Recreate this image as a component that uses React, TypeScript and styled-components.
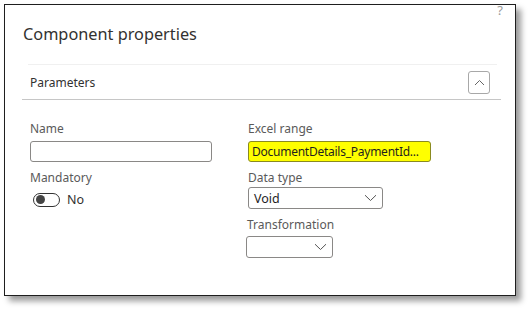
import React from "react";
import styled, { createGlobalStyle } from "styled-components";

const Global = createGlobalStyle`
  html, body { margin: 0; padding: 0; background: #ffffff; }
  body { font-family: "Noto Sans", "Open Sans", sans-serif; color: #323130; }
`;

const Page = styled.div`
  width: 529px;
  height: 309px;
  padding: 4px 0 0 4px;
  box-sizing: border-box;
  overflow: hidden;
`;

const Frame = styled.div`
  position: relative;
  width: 512px;
  height: 292px;
  box-sizing: border-box;
  border: 1px solid #1e1e1e;
  background: #fff;
  box-shadow: 5px 5px 6px rgba(0, 0, 0, 0.4);
  padding: 17px 14px 0 17px;
`;

const Help = styled.span`
  position: absolute;
  top: -3px;
  right: 12px;
  font-size: 13px;
  color: #9a9a9a;
  line-height: 16px;
`;

const Title = styled.h1`
  margin: 0 0 0 1px;
  font-size: 16.3px;
  font-weight: 400;
  line-height: 24px;
  color: #323130;
`;

const SoftRule = styled.div`
  height: 1px;
  background: #f0f0f0;
  margin: 18px 4px 0 6px;
`;

const SectionHeader = styled.div`
  display: flex;
  align-items: center;
  justify-content: space-between;
  height: 34px;
  border-bottom: 1px solid #c6c6c6;
  padding: 0 11px 0 8px;
`;

const SectionTitle = styled.span`
  font-size: 12px;
  color: #323130;
`;

const CollapseButton = styled.button`
  width: 22px;
  height: 23px;
  box-sizing: border-box;
  border: 1px solid #a8a8a8;
  border-radius: 3px;
  background: #fff;
  padding: 0;
  display: flex;
  align-items: center;
  justify-content: center;
  margin-top: 1px;
`;

const Fields = styled.div`
  display: grid;
  grid-template-columns: 182px 1fr;
  column-gap: 36px;
  padding: 21px 0 0 8px;
`;

const Column = styled.div`
  display: flex;
  flex-direction: column;
  gap: 8px;
`;

const Field = styled.div<{ $gap?: number }>`
  display: flex;
  flex-direction: column;
  gap: ${(p) => p.$gap ?? 4}px;
`;

const Label = styled.label`
  font-size: 12px;
  line-height: 16px;
  color: #5a5a5a;
`;

const TextInput = styled.div<{ $highlight?: boolean; $width: number }>`
  width: ${(p) => p.$width}px;
  height: 21px;
  box-sizing: border-box;
  border: 1px solid ${(p) => (p.$highlight ? "#8a8a20" : "#8a8886")};
  border-radius: 3px;
  background: ${(p) => (p.$highlight ? "#ffff00" : "#fff")};
  font-size: 12px;
  letter-spacing: -0.25px;
  line-height: 19px;
  padding: 0 3px;
  color: #1f1f1f;
  white-space: nowrap;
  overflow: hidden;
`;

const Select = styled.div<{ $width: number }>`
  width: ${(p) => p.$width}px;
  height: 22px;
  box-sizing: border-box;
  border: 1px solid #8a8886;
  border-radius: 3px;
  background: #fff;
  display: flex;
  align-items: center;
  justify-content: space-between;
  padding: 0 5px 0 5px;
  font-size: 12.5px;
  color: #1f1f1f;
`;

const ToggleRow = styled.div`
  display: flex;
  align-items: center;
  gap: 7px;
  padding-left: 3px;
`;

const Track = styled.div`
  width: 27px;
  height: 14px;
  box-sizing: border-box;
  border: 1px solid #333;
  border-radius: 7px;
  display: flex;
  align-items: center;
  padding-left: 2px;
`;

const Knob = styled.div`
  width: 9px;
  height: 9px;
  border-radius: 50%;
  background: #444;
`;

const ToggleText = styled.span`
  font-size: 12.5px;
  color: #323130;
`;

const ChevronDown = () => (
  <svg width="13" height="8" viewBox="0 0 13 8" fill="none">
    <path d="M1 1.2 L6.5 6.5 L12 1.2" stroke="#555" strokeWidth="1" />
  </svg>
);

const ChevronUp = () => (
  <svg width="11" height="7" viewBox="0 0 11 7" fill="none">
    <path d="M1 6 L5.5 1.5 L10 6" stroke="#666" strokeWidth="1" />
  </svg>
);

export default function App() {
  return (
    <Page>
      <Global />
      <Frame>
        <Help>?</Help>
        <Title>Component properties</Title>
        <SoftRule />
        <SectionHeader>
          <SectionTitle>Parameters</SectionTitle>
          <CollapseButton aria-label="Collapse">
            <ChevronUp />
          </CollapseButton>
        </SectionHeader>
        <Fields>
          <Column>
            <Field>
              <Label>Name</Label>
              <TextInput $width={182} />
            </Field>
            <Field $gap={5}>
              <Label>Mandatory</Label>
              <ToggleRow>
                <Track>
                  <Knob />
                </Track>
                <ToggleText>No</ToggleText>
              </ToggleRow>
            </Field>
          </Column>
          <Column>
            <Field>
              <Label>Excel range</Label>
              <TextInput $width={183} $highlight>
                DocumentDetails_PaymentId...
              </TextInput>
            </Field>
            <Field $gap={1}>
              <Label>Data type</Label>
              <Select $width={135}>
                <span>Void</span>
                <ChevronDown />
              </Select>
            </Field>
            <Field $gap={3}>
              <Label style={{ marginLeft: -1 }}>Transformation</Label>
              <Select $width={87} style={{ marginLeft: -2 }}>
                <span />
                <ChevronDown />
              </Select>
            </Field>
          </Column>
        </Fields>
      </Frame>
    </Page>
  );
}
